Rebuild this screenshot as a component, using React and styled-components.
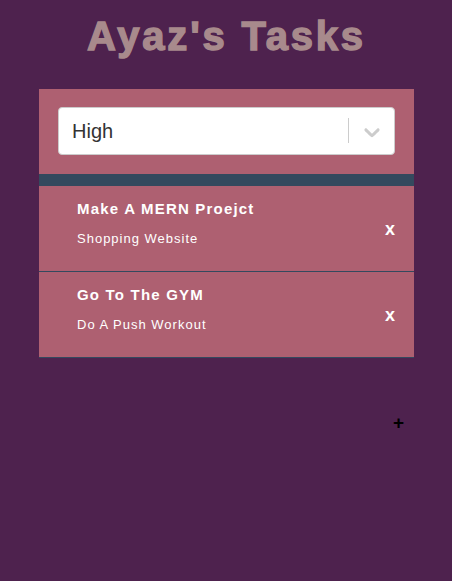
import React from "react";
import styled, { createGlobalStyle } from "styled-components";

const tasks = [
    { id: 1, title: "Make A MERN Proejct", detail: "Shopping Website" },
    { id: 2, title: "Go To The GYM", detail: "Do A Push Workout" },
];

const App = () => {
    return (
        <>
            <GlobalStyle />
            <Page>
                <Heading>Ayaz's Tasks</Heading>
                <Board>
                    <FilterBar>
                        <SelectBox>
                            <SelectValue>High</SelectValue>
                            <Separator />
                            <Indicator>
                                <svg width="26" height="26" viewBox="0 0 20 20" fill="#cccccc">
                                    <path d="M4.516 7.548c0.436-0.446 1.043-0.481 1.576 0l3.908 3.747 3.908-3.747c0.533-0.481 1.141-0.446 1.574 0 0.436 0.445 0.408 1.197 0 1.615-0.406 0.418-4.695 4.502-4.695 4.502-0.217 0.223-0.502 0.335-0.787 0.335s-0.57-0.112-0.789-0.335c0 0-4.287-4.084-4.695-4.502s-0.436-1.17 0-1.615z" />
                                </svg>
                            </Indicator>
                        </SelectBox>
                    </FilterBar>
                    <Band />
                    {tasks.map((task) => (
                        <TaskRow key={task.id}>
                            <TaskText>
                                <TaskTitle>{task.title}</TaskTitle>
                                <TaskDetail>{task.detail}</TaskDetail>
                            </TaskText>
                            <DeleteButton>x</DeleteButton>
                        </TaskRow>
                    ))}
                </Board>
                <AddRow>
                    <AddButton>+</AddButton>
                </AddRow>
            </Page>
        </>
    );
};

export default App;


const GlobalStyle = createGlobalStyle`
    html, body {
        margin: 0;
        background: #4e224e;
        font-family: "Liberation Sans", Arial, sans-serif;
    }
`;

const Page = styled.div`
    min-height: 581px;
    padding: 0 38px 0 39px;
    box-sizing: border-box;
`;

const Heading = styled.h1`
    margin: 13px 0 30px;
    text-align: center;
    font-size: 40px;
    line-height: 46px;
    font-weight: 700;
    letter-spacing: 2.8px;
    color: #a88a8c;
    -webkit-text-stroke: 1.4px #a88a8c;
`;

const Board = styled.div`
    background: #ae6071;
`;

const FilterBar = styled.div`
    padding: 18px 19px 19px;
`;

const SelectBox = styled.div`
    display: flex;
    align-items: center;
    height: 48px;
    box-sizing: border-box;
    background: #ffffff;
    border: 1px solid #cccccc;
    border-radius: 4px;
`;

const SelectValue = styled.div`
    flex: 1;
    padding-left: 13px;
    font-size: 20px;
    color: #333333;
`;

const Separator = styled.span`
    align-self: stretch;
    width: 1px;
    margin: 10px 0 11px;
    background: #cccccc;
`;

const Indicator = styled.div`
    width: 45px;
    display: flex;
    justify-content: center;
    align-items: center;
    padding-top: 2px;
`;

const Band = styled.div`
    height: 12px;
    background: #34495e;
`;

const TaskRow = styled.div`
    display: flex;
    align-items: center;
    height: 86px;
    box-sizing: border-box;
    padding: 0 19px 0 38px;
    border-bottom: 1px solid #34495e;
    color: #ffffff;
`;

const TaskText = styled.div`
    flex: 1;
    align-self: flex-start;
    padding-top: 14px;
`;

const TaskTitle = styled.h3`
    margin: 0 0 14px;
    font-size: 15px;
    line-height: 17px;
    font-weight: 700;
    letter-spacing: 1.2px;
`;

const TaskDetail = styled.p`
    margin: 0;
    font-size: 13px;
    line-height: 15px;
    letter-spacing: 1px;
`;

const DeleteButton = styled.span`
    font-size: 18px;
    font-weight: 700;
    cursor: pointer;
    padding-top: 2px;
`;

const AddRow = styled.div`
    display: flex;
    justify-content: flex-end;
    padding: 55px 10px 0 0;
`;

const AddButton = styled.span`
    font-size: 19px;
    line-height: 20px;
    font-weight: 700;
    color: #000000;
    cursor: pointer;
`;
